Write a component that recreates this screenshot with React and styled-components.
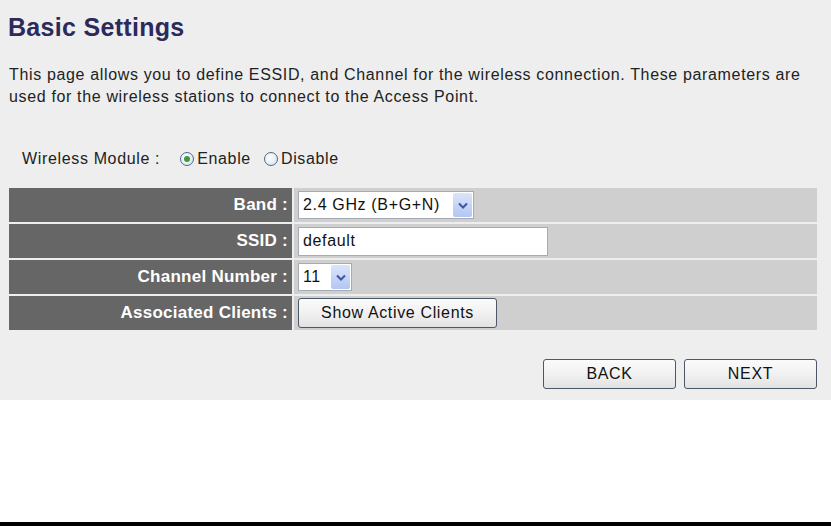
import React from 'react';
import styled, { createGlobalStyle } from 'styled-components';

const GlobalStyle = createGlobalStyle`
  html, body {
    margin: 0;
    padding: 0;
    background: #ffffff;
  }
  #root {
    height: 100vh;
  }
`;

const Page = styled.div`
  display: flex;
  flex-direction: column;
  height: 100vh;
  font-family: "Liberation Sans", Arial, sans-serif;
`;

const Panel = styled.div`
  height: 400px;
  background: #eeeeee;
  padding: 13px 14px 0 9px;
  box-sizing: border-box;
`;

const Filler = styled.div`
  flex: 1;
  background: #ffffff;
`;

const BottomBar = styled.div`
  height: 4px;
  background: #000000;
`;

const Title = styled.h1`
  margin: 0 0 0 -1px;
  font-size: 25px;
  line-height: 28px;
  font-weight: bold;
  letter-spacing: 0.3px;
  color: #2b2a5a;
`;

const Intro = styled.p`
  margin: 23px 0 0 0;
  font-size: 16px;
  line-height: 22px;
  letter-spacing: 0.65px;
  color: #222222;
  white-space: nowrap;
`;

const ModuleLine = styled.div`
  display: flex;
  align-items: center;
  margin: 40px 0 0 13px;
  height: 22px;
  font-size: 16px;
  letter-spacing: 0.65px;
  color: #222222;
`;

const ModuleLabel = styled.span`
  margin-right: 20px;
`;

const RadioOption = styled.label`
  display: flex;
  align-items: center;
  margin-right: 13px;
`;

const RadioCircle = styled.span`
  width: 14px;
  height: 14px;
  border-radius: 50%;
  border: 1px solid #4e6a8a;
  background: radial-gradient(circle at 40% 40%, #ffffff 0%, #e6ecf3 60%, #c9d4e0 100%);
  box-sizing: border-box;
  margin-right: 3px;
  display: flex;
  align-items: center;
  justify-content: center;
`;

const RadioDot = styled.span`
  width: 6px;
  height: 6px;
  border-radius: 50%;
  background: #3e9a3e;
`;

const Table = styled.div`
  display: flex;
  flex-direction: column;
  gap: 2px;
  margin-top: 18px;
`;

const Row = styled.div`
  display: grid;
  grid-template-columns: 283px 1fr;
  gap: 2px;
  height: 34px;
`;

const LabelCell = styled.div`
  background: #666666;
  color: #ffffff;
  font-weight: bold;
  font-size: 17px;
  letter-spacing: 0.25px;
  display: flex;
  align-items: center;
  justify-content: flex-end;
  padding-right: 4px;
`;

const ValueCell = styled.div`
  background: #cfcfcf;
  display: flex;
  align-items: center;
  padding-left: 4px;
`;

const SelectBox = styled.div`
  display: flex;
  align-items: stretch;
  height: 28px;
  width: ${p => p.$width}px;
  box-sizing: border-box;
  border: 1px solid #a5acb5;
  background: #ffffff;
  font-size: 16px;
  letter-spacing: 0.65px;
  color: #111111;
`;

const SelectText = styled.span`
  flex: 1;
  display: flex;
  align-items: center;
  padding-left: 4px;
  white-space: nowrap;
`;

const ArrowButton = styled.span`
  width: 19px;
  margin: 1px;
  border-radius: 2px;
  background: linear-gradient(#dbe5fb, #b3c6f2);
  display: flex;
  align-items: center;
  justify-content: center;
`;

const TextInput = styled.div`
  width: 250px;
  height: 29px;
  box-sizing: border-box;
  border: 1px solid #a5acb5;
  background: #ffffff;
  font-size: 16px;
  letter-spacing: 0.65px;
  color: #111111;
  display: flex;
  align-items: center;
  padding-left: 4px;
`;

const PushButton = styled.button`
  width: ${p => p.$width}px;
  height: 30px;
  box-sizing: border-box;
  border: 1px solid #4b5867;
  border-radius: 3px;
  background: linear-gradient(#fbfbfb 0%, #f1f1f1 50%, #e2e2e2 100%);
  font-family: "Liberation Sans", Arial, sans-serif;
  font-size: 16px;
  letter-spacing: 0.65px;
  color: #111111;
  padding: 0;
`;

const Actions = styled.div`
  display: flex;
  justify-content: flex-end;
  gap: 8px;
  margin-top: 29px;
`;

const Chevron = () => (
  <svg width="10" height="7" viewBox="0 0 10 7">
    <path d="M1 1.5 L5 5.5 L9 1.5" fill="none" stroke="#3b57a8" strokeWidth="2" />
  </svg>
);

const Radio = ({ checked, children }) => (
  <RadioOption>
    <RadioCircle>{checked && <RadioDot />}</RadioCircle>
    {children}
  </RadioOption>
);

const App = () => {
  return (
    <Page>
      <GlobalStyle />
      <Panel>
        <Title>Basic Settings</Title>
        <Intro>
          This page allows you to define ESSID, and Channel for the wireless connection. These parameters are
          <br />
          used for the wireless stations to connect to the Access Point.
        </Intro>
        <ModuleLine>
          <ModuleLabel>Wireless Module :</ModuleLabel>
          <Radio checked>Enable</Radio>
          <Radio>Disable</Radio>
        </ModuleLine>
        <Table>
          <Row>
            <LabelCell>Band :</LabelCell>
            <ValueCell>
              <SelectBox $width={176}>
                <SelectText>2.4 GHz (B+G+N)</SelectText>
                <ArrowButton><Chevron /></ArrowButton>
              </SelectBox>
            </ValueCell>
          </Row>
          <Row>
            <LabelCell>SSID :</LabelCell>
            <ValueCell>
              <TextInput>default</TextInput>
            </ValueCell>
          </Row>
          <Row>
            <LabelCell>Channel Number :</LabelCell>
            <ValueCell>
              <SelectBox $width={54}>
                <SelectText>11</SelectText>
                <ArrowButton><Chevron /></ArrowButton>
              </SelectBox>
            </ValueCell>
          </Row>
          <Row>
            <LabelCell>Associated Clients :</LabelCell>
            <ValueCell>
              <PushButton $width={199}>Show Active Clients</PushButton>
            </ValueCell>
          </Row>
        </Table>
        <Actions>
          <PushButton $width={133}>BACK</PushButton>
          <PushButton $width={133}>NEXT</PushButton>
        </Actions>
      </Panel>
      <Filler />
      <BottomBar />
    </Page>
  );
};

export default App;
